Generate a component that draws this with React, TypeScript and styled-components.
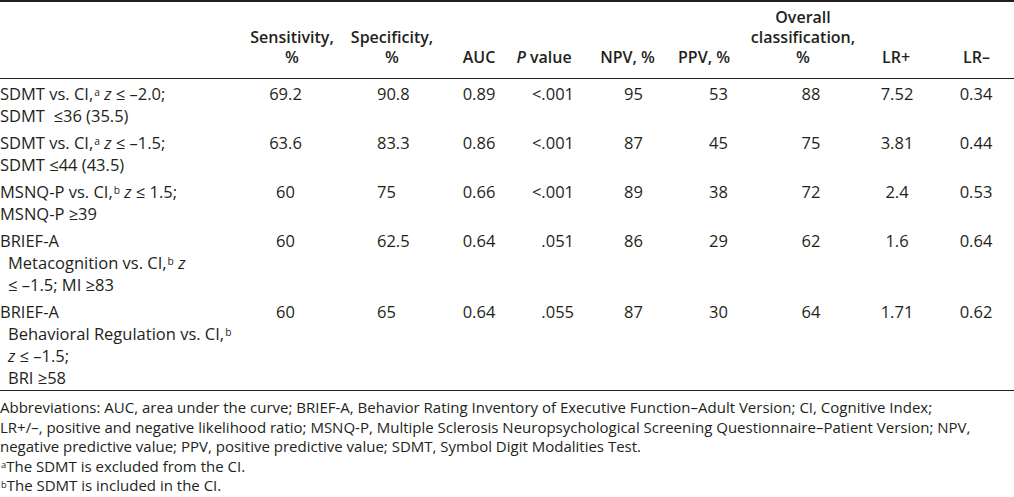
import React from 'react';
import styled, { createGlobalStyle } from 'styled-components';

const Global = createGlobalStyle`
  html, body { margin: 0; padding: 0; background: #ffffff; }
  body {
    font-family: "Open Sans", "Noto Sans", "DejaVu Sans", sans-serif;
    color: #231f20;
    font-size: 16.5px;
  }
`;

const COLS = '245px 97px 93px 76px 74px 80px 88px 97px 86px 78px';

type Align = 'center' | 'start' | 'end';

type Column = {
  head: React.ReactNode[];
  hShift: number;
  align: Align;
  dPad: number;
};

const Page = styled.div`
  width: 1014px;
`;

const Table = styled.div`
  border-top: 2px solid #231f20;
  border-bottom: 1px solid #231f20;
`;

const HeadRow = styled.div`
  display: grid;
  grid-template-columns: ${COLS};
  padding: 5px 0 11px;
  border-bottom: 1px solid #231f20;
  font-weight: 600;
  font-size: 16px;
  line-height: 20px;
`;

const HeadCell = styled.div<{ $shift: number }>`
  display: flex;
  flex-direction: column;
  justify-content: flex-end;
  align-items: center;
  white-space: nowrap;
  padding-left: ${(p) => Math.max(0, p.$shift * 2)}px;
  padding-right: ${(p) => Math.max(0, -p.$shift * 2)}px;
`;

const BodyRow = styled.div`
  display: grid;
  grid-template-columns: ${COLS};
  padding: 4px 0 1px;
  line-height: 22px;
`;

const LabelCell = styled.div`
  display: flex;
  flex-direction: column;
  white-space: pre;
`;

const LabelLine = styled.span<{ $indent?: boolean }>`
  padding-left: ${(p) => (p.$indent ? 8 : 0)}px;
`;

const ValueCell = styled.div<{ $align: Align; $pad: number }>`
  display: flex;
  align-items: flex-start;
  white-space: nowrap;
  justify-content: ${(p) =>
    p.$align === 'center' ? 'center' : p.$align === 'start' ? 'flex-start' : 'flex-end'};
  padding-left: ${(p) =>
    p.$align === 'start' ? p.$pad : p.$align === 'center' ? Math.max(0, p.$pad * 2) : 0}px;
  padding-right: ${(p) =>
    p.$align === 'end' ? p.$pad : p.$align === 'center' ? Math.max(0, -p.$pad * 2) : 0}px;
`;

const Sup = styled.sup`
  font-size: 0.62em;
  line-height: 0;
  vertical-align: 0.4em;
  margin-left: 1px;
`;

const Ital = styled.i`
  font-style: italic;
`;

const Notes = styled.div`
  padding-top: 7px;
  line-height: 19.6px;
  font-size: 15px;
`;

const NoteLine = styled.div`
  white-space: nowrap;
`;

const columns: Column[] = [
  { head: ['Sensitivity,', '%'], hShift: -1.5, align: 'center', dPad: -8 },
  { head: ['Specificity,', '%'], hShift: 3.5, align: 'start', dPad: 35 },
  { head: ['AUC'], hShift: 6, align: 'center', dPad: 6 },
  { head: [<><Ital>P</Ital> value</>], hShift: -4, align: 'end', dPad: 11 },
  { head: ['NPV, %'], hShift: 2.5, align: 'center', dPad: 8.5 },
  { head: ['PPV, %'], hShift: -5, align: 'center', dPad: 9.5 },
  { head: ['Overall', 'classification,', '%'], hShift: 1.5, align: 'center', dPad: 9.5 },
  { head: ['LR+'], hShift: 3, align: 'center', dPad: 4 },
  { head: ['LR–'], hShift: 1.5, align: 'center', dPad: 1 },
];

type Line = { text: React.ReactNode; indent?: boolean };
type Row = { label: Line[]; values: string[] };

const rows: Row[] = [
  {
    label: [
      { text: <>SDMT vs. CI,<Sup>a</Sup> <Ital>z</Ital> ≤ –2.0;</> },
      { text: 'SDMT  ≤36 (35.5)' },
    ],
    values: ['69.2', '90.8', '0.89', '<.001', '95', '53', '88', '7.52', '0.34'],
  },
  {
    label: [
      { text: <>SDMT vs. CI,<Sup>a</Sup> <Ital>z</Ital> ≤ –1.5;</> },
      { text: 'SDMT ≤44 (43.5)' },
    ],
    values: ['63.6', '83.3', '0.86', '<.001', '87', '45', '75', '3.81', '0.44'],
  },
  {
    label: [
      { text: <>MSNQ-P vs. CI,<Sup>b</Sup> <Ital>z</Ital> ≤ 1.5;</> },
      { text: 'MSNQ-P ≥39' },
    ],
    values: ['60', '75', '0.66', '<.001', '89', '38', '72', '2.4', '0.53'],
  },
  {
    label: [
      { text: 'BRIEF-A' },
      { text: <>Metacognition vs. CI,<Sup>b</Sup> <Ital>z</Ital></>, indent: true },
      { text: '≤ –1.5; MI ≥83', indent: true },
    ],
    values: ['60', '62.5', '0.64', '.051', '86', '29', '62', '1.6', '0.64'],
  },
  {
    label: [
      { text: 'BRIEF-A' },
      { text: <>Behavioral Regulation vs. CI,<Sup>b</Sup></>, indent: true },
      { text: <><Ital>z</Ital> ≤ –1.5;</>, indent: true },
      { text: 'BRI ≥58', indent: true },
    ],
    values: ['60', '65', '0.64', '.055', '87', '30', '64', '1.71', '0.62'],
  },
];

export default function App() {
  return (
    <Page>
      <Global />
      <Table>
        <HeadRow>
          <HeadCell $shift={0} />
          {columns.map((c, i) => (
            <HeadCell key={i} $shift={c.hShift}>
              {c.head.map((h, j) => (
                <span key={j}>{h}</span>
              ))}
            </HeadCell>
          ))}
        </HeadRow>
        {rows.map((r, i) => (
          <BodyRow key={i}>
            <LabelCell>
              {r.label.map((l, j) => (
                <LabelLine key={j} $indent={l.indent}>
                  {l.text}
                </LabelLine>
              ))}
            </LabelCell>
            {r.values.map((v, j) => (
              <ValueCell key={j} $align={columns[j].align} $pad={columns[j].dPad}>
                {v}
              </ValueCell>
            ))}
          </BodyRow>
        ))}
      </Table>
      <Notes>
        <NoteLine>
          Abbreviations: AUC, area under the curve; BRIEF-A, Behavior Rating Inventory of Executive
          Function–Adult Version; CI, Cognitive Index;
        </NoteLine>
        <NoteLine>
          LR+/–, positive and negative likelihood ratio; MSNQ-P, Multiple Sclerosis Neuropsychological
          Screening Questionnaire–Patient Version; NPV,
        </NoteLine>
        <NoteLine>
          negative predictive value; PPV, positive predictive value; SDMT, Symbol Digit Modalities Test.
        </NoteLine>
        <NoteLine>
          <Sup>a</Sup>The SDMT is excluded from the CI.
        </NoteLine>
        <NoteLine>
          <Sup>b</Sup>The SDMT is included in the CI.
        </NoteLine>
      </Notes>
    </Page>
  );
}
